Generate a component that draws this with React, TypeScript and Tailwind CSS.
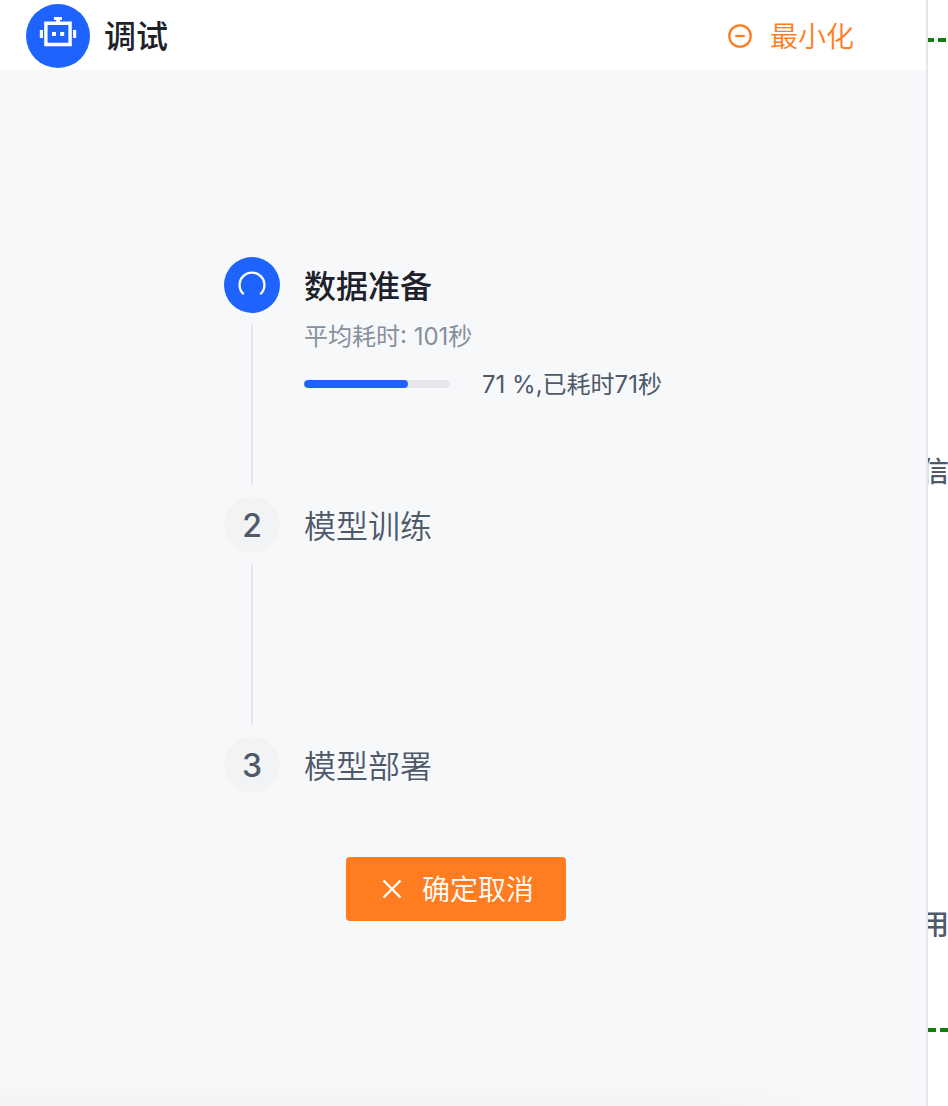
import type { ReactNode } from 'react';

const PERCENT = 71;

function RobotIcon() {
  return (
    <svg viewBox="0 0 64 64" className="size-16" aria-hidden="true">
      <g fill="#fff">
        <path d="M28 13h8v3h-2.200v2h-3.600v-2H28z" />
        <path fillRule="evenodd" d="M18.200 17.500h27.600V42.200H18.200zM21.600 20.900v17.900h20.800v-17.900z" />
        <path d="M13.800 26H17v8h-3.200zM47 26h3.200v8H47z" />
        <path d="M26 28h4v4h-4zM34.200 28h4v4h-4z" />
      </g>
    </svg>
  );
}

function MinusCircleIcon() {
  return (
    <svg viewBox="0 0 24 24" className="size-6" fill="none" stroke="currentColor" strokeWidth="2.300" aria-hidden="true">
      <circle cx="12" cy="12" r="10.700" />
      <path d="M7.200 12h9.600" />
    </svg>
  );
}

function CloseIcon() {
  return (
    <svg viewBox="0 0 28 28" className="size-7" fill="none" stroke="currentColor" strokeWidth="2.400" aria-hidden="true">
      <path d="M5.500 5.500l17 17M22.500 5.500l-17 17" />
    </svg>
  );
}

function LoadingIcon() {
  return (
    <svg viewBox="0 0 28 28" className="size-7" fill="none" stroke="#fff" strokeWidth="2.300" aria-hidden="true">
      <path d="M5.700 23.200A12.400 12.400 0 1 1 22.300 23.200" />
    </svg>
  );
}

type StepProps = {
  marker: ReactNode;
  title: string;
  active?: boolean;
  last?: boolean;
  children?: ReactNode;
};

function Step({ marker, title, active, last, children }: StepProps) {
  return (
    <li className={last ? 'flex h-14 gap-6' : 'flex min-h-60 gap-6'}>
      <div className="flex flex-col items-center">
        <div
          className={
            active
              ? 'flex size-14 items-center justify-center rounded-full bg-[#1f63ff]'
              : 'flex size-14 items-center justify-center rounded-full bg-[#f2f3f5] pt-0.5 text-[32px] leading-10 font-medium text-[#4e5969]'
          }
        >
          {marker}
        </div>
        {!last && <div className="my-3 w-0.5 flex-1 bg-[#e5e6eb]" />}
      </div>
      <div className="flex-1">
        <h2
          className={
            active
              ? 'text-[32px] leading-[60px] font-medium text-[#1d2129]'
              : 'text-[32px] leading-[60px] font-[350] text-[#4e5969]'
          }
        >
          {title}
        </h2>
        {children}
      </div>
    </li>
  );
}

function Canvas() {
  return (
    <aside className="relative w-5 shrink-0 overflow-hidden bg-white text-[28px] leading-10 font-medium text-[#4e5969]">
      <svg className="absolute top-[38px] left-0 h-1 w-5" aria-hidden="true">
        <path d="M-2 2H18" stroke="#0f800f" strokeWidth="4" strokeDasharray="8 4" />
      </svg>
      <span className="absolute top-[452px] -left-[7px]">信</span>
      <span className="absolute top-[905px] -left-[7px]">用</span>
      <svg className="absolute top-[1028px] left-0 h-1 w-5" aria-hidden="true">
        <path d="M0 2H20" stroke="#0f800f" strokeWidth="4" strokeDasharray="8 4" />
      </svg>
    </aside>
  );
}

export default function App() {
  return (
    <div className="flex min-h-screen bg-white font-['Inter','Noto_Sans_CJK_SC',sans-serif] font-[350]">
      <section className="flex flex-1 flex-col border-r-2 border-[#e5e6eb] bg-[#f7f8fa]">
        <header className="flex items-center justify-between bg-white pt-1 pr-18 pb-0.5 pl-[26px]">
          <div className="flex items-center gap-3.5">
            <span className="rounded-full bg-[#1f63ff]">
              <RobotIcon />
            </span>
            <h1 className="pt-0.5 text-[32px] leading-10 font-medium text-[#1d2129]">调试</h1>
          </div>
          <button type="button" className="flex items-center gap-[18px] text-[28px] leading-10 text-[#ff7d20]">
            <MinusCircleIcon />
            <span className="pt-0.5">最小化</span>
          </button>
        </header>

        <main className="flex flex-1 flex-col items-center pt-[187px] pr-3.5">
          <ol className="w-[464px]">
            <Step marker={<LoadingIcon />} title="数据准备" active>
              <p className="text-2xl leading-10 font-normal text-[#86909c]">平均耗时: 101秒</p>
              <div className="flex items-center gap-8 text-2xl leading-[52px] font-normal text-[#4e5969]">
                <div
                  role="progressbar"
                  aria-label="数据准备"
                  aria-valuenow={PERCENT}
                  className="h-2 w-[146px] overflow-hidden rounded-full bg-[#e5e6eb]"
                >
                  <div className="h-full rounded-full bg-[#1f63ff]" style={{ width: `${PERCENT}%` }} />
                </div>
                <span className="pt-0.5 whitespace-nowrap">{PERCENT} %,已耗时71秒</span>
              </div>
            </Step>
            <Step marker="2" title="模型训练" />
            <Step marker="3" title="模型部署" last />
          </ol>
          <button
            type="button"
            className="mt-16 flex h-16 items-center gap-4 rounded-sm bg-[#ff7d20] px-8 text-[28px] text-white"
          >
            <CloseIcon />
            <span className="pt-0.5">确定取消</span>
          </button>
        </main>
        <div className="h-6 bg-linear-to-b from-[#f7f8fa] to-[#f2f3f5]">
          <div className="h-full bg-linear-to-r from-transparent from-75% to-[#f7f8fa] to-90%" />
        </div>
      </section>
      <Canvas />
    </div>
  );
}
